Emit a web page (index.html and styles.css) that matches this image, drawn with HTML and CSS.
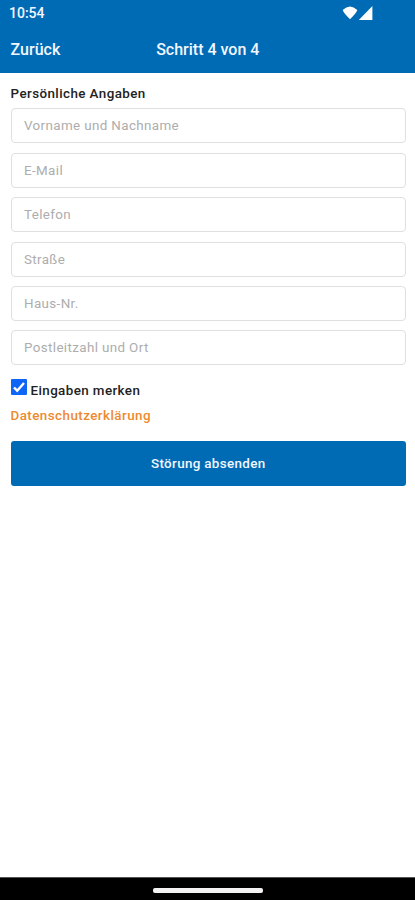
FILE: index.html
```html
<!DOCTYPE html>
<html lang="de">
<head>
<meta charset="utf-8">
<meta name="viewport" content="width=device-width, initial-scale=1">
<title>Störung melden</title>
<link rel="stylesheet" href="styles.css">
</head>
<body>
<header class="header">
  <div class="status">
    <span class="time">10:54</span>
    <svg class="signals" width="32" height="16" viewBox="0 0 32 16" aria-hidden="true">
      <path d="M.7 4Q8 -3.2 15.3 4Q14 7.5 8 13.2Q2 7.5 .7 4Z"/>
      <path d="M30.4 0V13.9H16.8Z"/>
    </svg>
  </div>
  <nav class="nav">
    <span class="back">Zurück</span>
    <span class="step">Schritt 4 von 4</span>
  </nav>
</header>
<main class="content">
  <h1 class="title"><span>Persönliche Angaben</span></h1>
  <form class="form">
    <div class="fields">
      <input class="field" type="text" placeholder="Vorname und Nachname">
      <input class="field" type="text" placeholder="E-Mail">
      <input class="field" type="text" placeholder="Telefon">
      <input class="field" type="text" placeholder="Straße">
      <input class="field" type="text" placeholder="Haus-Nr.">
      <input class="field" type="text" placeholder="Postleitzahl und Ort">
    </div>
    <div class="remember">
      <svg class="check" width="16" height="16" viewBox="0 0 16 16" aria-hidden="true">
        <rect width="16" height="16" rx="1" fill="#0d66f5"/>
        <path d="M3 8.5L6.2 11.7L13 4" fill="none" stroke="#fff" stroke-width="2.4"/>
      </svg>
      <span class="remember-text">Eingaben merken</span>
    </div>
    <a class="privacy">Datenschutzerklärung</a>
    <button class="submit" type="button">Störung absenden</button>
  </form>
</main>
<footer class="system"><div class="handle"></div></footer>
</body>
</html>
```

FILE: styles.css
```css
* { box-sizing: border-box; }
body {
  margin: 0;
  height: 900px;
  display: flex;
  flex-direction: column;
  overflow: hidden;
  background: #fff;
  color: #222;
  font-family: Roboto, "Liberation Sans", sans-serif;
}
.header { height: 72.5px; background: #006bb5; color: #f2f7ff; }
.status {
  height: 26px;
  display: flex;
  justify-content: space-between;
  padding: 0 41px 0 9px;
}
.time { font-size: 14px; font-weight: 500; line-height: 27px; }
.signals { margin-top: 6px; fill: #fff; }
.nav {
  height: 46px;
  display: grid;
  grid-template-columns: 1fr auto 1fr;
  padding: 0 10px 0 10.6px;
  font-size: 16px;
  font-weight: 500;
  line-height: 48px;
}
.content { flex: 1; padding: 11px 9px 0 10.5px; }
.title { margin: 0; font-size: 13.4px; font-weight: 500; line-height: 20px; letter-spacing: .42px; }
.form { display: flex; flex-direction: column; }
.fields { display: flex; flex-direction: column; gap: 9.4px; margin-top: 4.9px; }
.field {
  width: 100%;
  height: 35px;
  padding: 0 12.5px;
  border: 1.5px solid #dfdfdf;
  border-radius: 4px;
  background: #fff;
  font: 400 13.4px Roboto, sans-serif;
  letter-spacing: .37px;
}
.field::placeholder { color: #adadad; opacity: 1; }
.remember { display: flex; gap: 4px; height: 22px; margin-top: 14px; }
.remember-text { font-size: 13.4px; font-weight: 500; line-height: 23.4px; letter-spacing: .4px; }
.privacy { color: #ed8a2f; font-size: 13.4px; font-weight: 500; line-height: 22px; margin-top: 3.6px; letter-spacing: .44px; }
.submit {
  height: 45px;
  margin-top: 14px;
  border: 0;
  border-radius: 3px;
  background: #006bb5;
  color: #f2f7ff;
  font: 500 13.4px Roboto, sans-serif;
  letter-spacing: .34px;
}
.system {
  height: 23.5px;
  background: #000;
  border-top: 1px solid #555;
  display: flex;
  justify-content: center;
  padding-top: 10px;
}
.handle { width: 110px; height: 5px; border-radius: 2px; background: #f5f2f4; }
```
